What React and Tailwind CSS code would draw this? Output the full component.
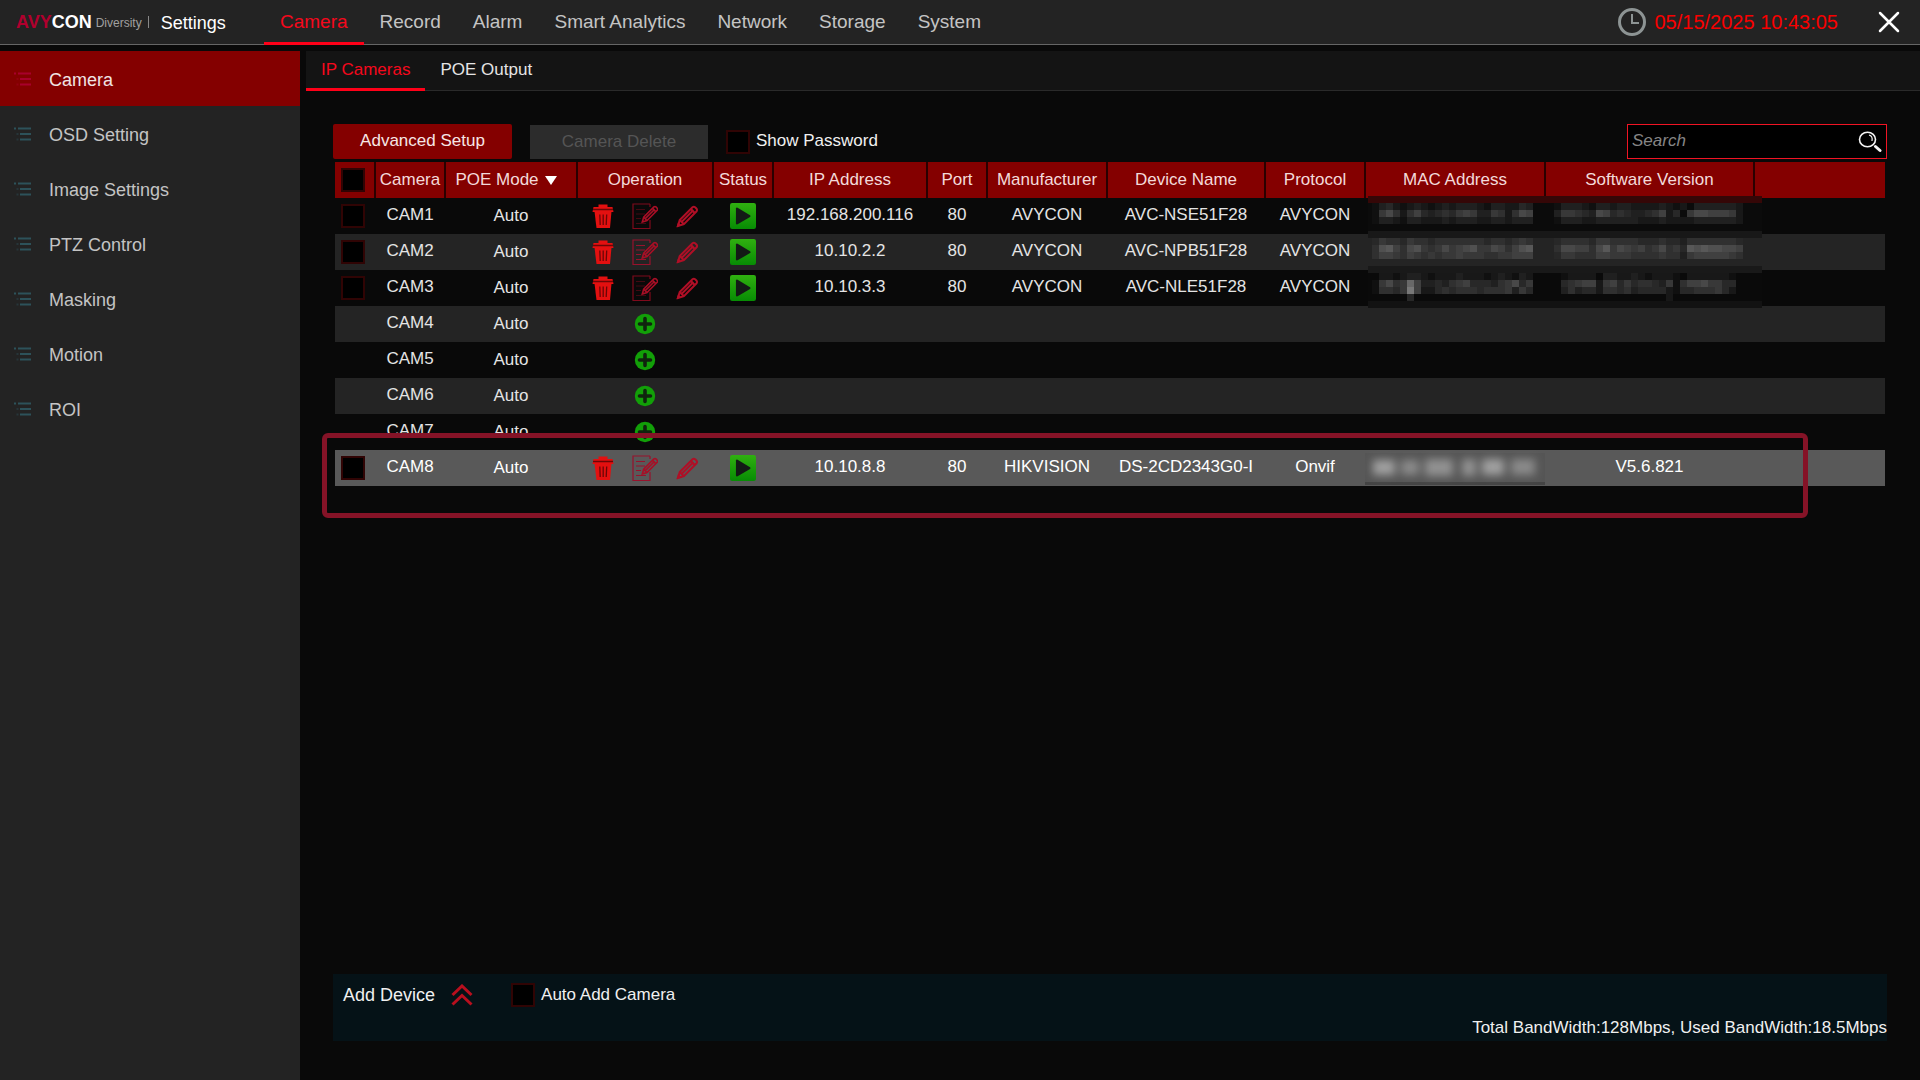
import React, { useState } from 'react';
import clsx from 'clsx';

const NAV = ['Camera', 'Record', 'Alarm', 'Smart Analytics', 'Network', 'Storage', 'System'];
const SIDE = ['Camera', 'OSD Setting', 'Image Settings', 'PTZ Control', 'Masking', 'Motion', 'ROI'];
const TABS = ['IP Cameras', 'POE Output'];

const CAMERAS = [
  { id: 'CAM1', ip: '192.168.200.116', port: 80, maker: 'AVYCON', name: 'AVC-NSE51F28', protocol: 'AVYCON' },
  { id: 'CAM2', ip: '10.10.2.2', port: 80, maker: 'AVYCON', name: 'AVC-NPB51F28', protocol: 'AVYCON' },
  { id: 'CAM3', ip: '10.10.3.3', port: 80, maker: 'AVYCON', name: 'AVC-NLE51F28', protocol: 'AVYCON' },
  { id: 'CAM4' },
  { id: 'CAM5' },
  { id: 'CAM6' },
  { id: 'CAM7' },
  {
    id: 'CAM8',
    ip: '10.10.8.8',
    port: 80,
    maker: 'HIKVISION',
    name: 'DS-2CD2343G0-I',
    protocol: 'Onvif',
    version: 'V5.6.821',
    selected: true,
  },
];

// censored area: one string per line of 7px blocks, each hex digit is a grey level
const MOSAIC = [
  { y: 7, mac: '24532343234344432443354', sw: '244432443443333432314444443' },
  { y: 14, mac: '27963685456578744763698', sw: '477654985654456835179988873' },
  { y: 21, mac: '24432443334344433443444', sw: '244433444444333433334444443' },
  { y: 42, mac: '57665766566666665665676', sw: '566665776666555655466666665' },
  { y: 49, mac: '6ab869a7679789a779868ab', sw: '6998869b79878679675babaa998' },
  { y: 56, mac: '68876876767787776677888', sw: '577666887776666766478888876' },
  { y: 77, mac: '13323443233343332343243', sw: '023333144334323332133333320' },
  { y: 84, mac: '27967d84454678555467957', sw: '056788378575665472688977550' },
  { y: 91, mac: '26657f83356566656667475', sw: '046455366564555532556667530' },
  { y: 98, mac: '11111511111111111111111', sw: '011111111111111131111111110' },
];
const BANDS = [
  [0, '#350707'], [7, '#0b0b0b'], [35, '#181818'], [42, '#242424'],
  [70, '#191919'], [77, '#0a0a0a'], [105, '#121212'],
];

const Mosaic = () => {
  const blocks = (line, x, y) =>
    [...line].map((c, i) => {
      const v = parseInt(c, 16) * 8;
      return v > 8 && <rect key={`${x}-${y}-${i}`} x={x + i * 7} y={y} width="7" height="7" fill={`rgb(${v},${v},${v})`} />;
    });
  return (
    <svg
      className="absolute left-[1033px] top-[34px] pointer-events-none"
      width="394"
      height="112"
      shapeRendering="crispEdges"
      aria-hidden="true"
    >
      {BANDS.map(([y, fill], i) => (
        <rect key={y} y={y} width="394" height={(BANDS[i + 1]?.[0] ?? 112) - y} fill={fill} />
      ))}
      {MOSAIC.map(l => [blocks(l.mac, 4, l.y), blocks(l.sw, 186, l.y)])}
    </svg>
  );
};

const BlurredMac = () => (
  <svg className="block w-full h-9" viewBox="0 0 180 36" preserveAspectRatio="none" aria-hidden="true">
    <defs>
      <filter id="soft" x="-10%" y="-50%" width="120%" height="200%">
        <feGaussianBlur stdDeviation="4" />
      </filter>
    </defs>
    <rect y="3" width="180" height="31" fill="#555" />
    <rect y="32" width="180" height="3" fill="#444" />
    <g filter="url(#soft)" fill="#a0a0a0">
      <rect x="8" y="10" width="22" height="15" />
      <rect x="36" y="10" width="18" height="15" opacity=".7" />
      <rect x="60" y="9" width="28" height="17" opacity=".8" />
      <rect x="97" y="9" width="14" height="17" opacity=".8" />
      <rect x="117" y="9" width="22" height="16" />
      <rect x="146" y="9" width="24" height="16" opacity=".7" />
    </g>
  </svg>
);

const ListIcon = ({ active }) => (
  <svg width="17" height="14" viewBox="0 0 17 14" stroke={active ? '#a8002c' : '#2d525a'} strokeWidth="2">
    <path d="M0 1.5h2M4 1.5h13M6 7h11M6 12.5h11" />
    <path d="M2.5 7h2M2.5 12.5h2" opacity=".4" />
  </svg>
);

const TrashIcon = () => (
  <svg width="26" height="26" viewBox="0 0 26 26" fill="#e31010">
    <path d="M8.500 1.500h9v2.500h5l1 5h-21l1-5h5z" />
    <path d="M4.500 8.500h17L20 25H6.500z" />
    <path d="M3 6.500h20M9.800 11.500l.4 10.500M13.200 11.500V22M16.700 11.500l-.5 10.500" stroke="#6b0606" strokeWidth="1.300" />
  </svg>
);

const Pencil = () => (
  <>
    <path d="M3.500 22.500l1.700-6L18 3.700q1.300-1 2.600 0l1.500 1.500q1 1.300 0 2.600L9.400 20.700z" />
    <path d="M5.200 16.500l4.200 4.200M7.500 18L19 6.500M16.300 5.500l4 4" />
  </>
);

const EditIcon = ({ bright }) => (
  <svg width="26" height="26" viewBox="0 0 26 26" fill="none" stroke={bright ? '#98122c' : '#7f0a1c'} strokeWidth="1.200">
    <path d="M18 1H1v24.500h17V17M18 1v3" />
    <path d="M4 6.500h9M4 11h9M4 15.500h5M4 20.500h10" opacity={bright ? 1 : 0.5} />
    <g transform="translate(7.500 1) scale(.8)" stroke="#a80f26" strokeWidth="2">
      <Pencil />
    </g>
  </svg>
);

const PencilIcon = () => (
  <svg width="26" height="26" viewBox="0 0 26 26" fill="none" stroke="#b00f26" strokeWidth="2">
    <g transform="translate(.5 .5)">
      <Pencil />
    </g>
    <path d="M2.500 24l1.600-5 3.400 3.400z" fill="#b00f26" stroke="none" />
  </svg>
);

const PlayIcon = () => (
  <svg width="26" height="26" viewBox="0 0 24 24">
    <defs>
      <linearGradient id="play" x1="0" y1="0" x2="0" y2="1">
        <stop offset="0" stopColor="#30b010" />
        <stop offset="1" stopColor="#078c04" />
      </linearGradient>
    </defs>
    <rect width="24" height="24" rx="2" fill="url(#play)" />
    <path d="M5.500 5v14q.3 1.200 1.500.7L18.500 13q1-.8 0-1.600L7 4.300q-1.200-.5-1.500.7z" fill="#131a16" />
  </svg>
);

const PlusIcon = () => (
  <svg width="22" height="22" viewBox="0 0 22 22">
    <circle cx="11" cy="11" r="10.200" fill="#129f08" />
    <path d="M11 5.500v11M5.500 11h11" stroke="#10240e" strokeWidth="3.600" strokeLinecap="round" />
  </svg>
);

const Check = ({ className, ...props }) => (
  <input
    type="checkbox"
    className={clsx('appearance-none block size-6 shrink-0 border-2 border-[#300404] bg-black checked:bg-[#840000]', className)}
    {...props}
  />
);

const Row = ({ cam, striped }) => {
  const text = 'pb-0.5 truncate';
  return (
    <tr className={clsx('h-9', cam.selected ? 'bg-[#595959] text-white' : striped && 'bg-[#242424]')}>
      <td className="pl-1.5">{cam.ip && <Check aria-label={`Select ${cam.id}`} />}</td>
      <td className={text}>{cam.id}</td>
      <td>Auto</td>
      <td>
        <div className="flex justify-center gap-4">
          {cam.ip ? (
            <>
              <button aria-label="Delete"><TrashIcon /></button>
              <button aria-label="Edit"><EditIcon bright={cam.selected || striped} /></button>
              <button aria-label="Rename"><PencilIcon /></button>
            </>
          ) : (
            <button aria-label="Add"><PlusIcon /></button>
          )}
        </div>
      </td>
      <td>
        {cam.ip && <button className="block mx-auto" aria-label="Live view"><PlayIcon /></button>}
      </td>
      <td className={text}>{cam.ip}</td>
      <td className={text}>{cam.port}</td>
      <td className={text}>{cam.maker}</td>
      <td className={text}>{cam.name}</td>
      <td className={text}>{cam.protocol}</td>
      <td>{cam.selected && <BlurredMac />}</td>
      <td className={text}>{cam.version}</td>
      <td />
    </tr>
  );
};

const Header = () => (
  <header className="flex h-[45px] shrink-0 bg-[#232323] border-b border-[#666]">
    <div className="w-[264px] shrink-0 pl-4 flex items-center">
      <div className="text-lg font-bold text-[#b0002e]">
        AVY<span className="text-white">CON</span>
      </div>
      <div className="ml-1 pt-0.5 text-xs text-[#a0a0a0]">Diversity</div>
      <div className="ml-1.5 h-3 w-px bg-[#888]" />
      <h1 className="ml-3 pt-0.5 text-lg text-white">Settings</h1>
    </div>
    <nav className="flex -mb-px">
      {NAV.map((item, i) => (
        <a
          key={item}
          href="#"
          className={clsx(
            'px-4 pt-0.5 flex items-center text-[19px] border-b-3',
            i === 0 ? 'text-[#f5081c] border-[#ff0018]' : 'text-[#c4c4c4] border-transparent'
          )}
        >
          {item}
        </a>
      ))}
    </nav>
    <div className="ml-auto mr-5 flex items-center">
      <svg width="28" height="28" viewBox="0 0 28 28" fill="none" stroke="#8d9494" strokeWidth="3">
        <circle cx="14" cy="14" r="12.500" />
        <path d="M14 6v9h7" strokeWidth="2" />
      </svg>
      <time className="ml-2 text-xl text-[#f80000]">05/15/2025 10:43:05</time>
      <button className="ml-10" aria-label="Close">
        <svg width="22" height="22" viewBox="0 0 22 22" stroke="#fff" strokeWidth="2.500" strokeLinecap="round">
          <path d="M2 2l18 18M20 2L2 20" />
        </svg>
      </button>
    </div>
  </header>
);

const Sidebar = () => (
  <aside className="w-[300px] shrink-0 bg-[#232323]">
    {SIDE.map((item, i) => (
      <a
        key={item}
        href="#"
        className={clsx(
          'flex items-center gap-[18px] h-[55px] pl-3.5 text-lg',
          i === 0 ? 'bg-[#840000] text-[#f0e4e4]' : 'text-[#c4c4c4]'
        )}
      >
        <ListIcon active={i === 0} />
        <span className="pt-0.5">{item}</span>
      </a>
    ))}
  </aside>
);

const App = () => {
  const [query, setQuery] = useState('');
  const th = 'font-normal border-r-2 border-[#2a0000]';

  return (
    <div className="min-h-screen flex flex-col bg-[#090909] font-['Liberation_Sans',Arial,sans-serif] text-[17px] text-[#e4e4e4]">
      <Header />
      <div className="flex flex-1 gap-1.5 pt-1.5">
        <Sidebar />
        <main className="flex-1 min-w-0 flex flex-col">
          <div className="flex h-10 bg-[#141414] border-b border-[#2a2a2a]">
            {TABS.map((tab, i) => (
              <button
                key={tab}
                className={clsx(
                  '-mb-px px-[15px] border-b-3',
                  i === 0 ? 'text-[#f5081c] border-[#ff0018]' : 'border-transparent'
                )}
              >
                {tab}
              </button>
            ))}
          </div>

          <div className="flex-1 flex flex-col pt-[33px] pl-[27px] pr-[33px] pb-[39px]">
            <div className="flex items-center h-[35px]">
              <button className="w-[179px] h-full pb-0.5 rounded-xs bg-[#840000] text-[#f6e6e6]">Advanced Setup</button>
              <button disabled className="ml-[18px] w-[178px] h-[34px] bg-[#2c2c2c] text-[#555]">Camera Delete</button>
              <label className="ml-[18px] flex items-center gap-1.5 text-[#f0f0f0]">
                <Check />
                <span className="pb-0.5">Show Password</span>
              </label>
              <div className="ml-auto w-[260px] h-full flex items-center pr-1 bg-black border border-[#f01424]">
                <input
                  type="text"
                  aria-label="Search"
                  placeholder="Search"
                  value={query}
                  onChange={e => setQuery(e.target.value)}
                  className="flex-1 min-w-0 px-1 pb-0.5 italic outline-none placeholder:text-[#858585]"
                />
                <button aria-label="Find">
                  <svg width="24" height="22" viewBox="0 0 24 22" fill="none" stroke="#f4f4f4" strokeWidth="1.600">
                    <ellipse cx="9.500" cy="8.500" rx="8" ry="7.200" />
                    <path d="M11 4q4 1 3 6" strokeWidth="1.200" />
                    <path d="M17.500 15.500l4.500 4" strokeWidth="3" strokeLinecap="round" />
                  </svg>
                </button>
              </div>
            </div>

            <div className="relative mt-[3px] mx-0.5">
              <table className="w-full table-fixed text-center">
                <colgroup>
                  <col className="w-10" />
                  <col className="w-[70px]" />
                  <col className="w-[132px]" />
                  <col className="w-[136px]" />
                  <col className="w-[60px]" />
                  <col className="w-[154px]" />
                  <col className="w-[60px]" />
                  <col className="w-[120px]" />
                  <col className="w-[158px]" />
                  <col className="w-[100px]" />
                  <col className="w-[180px]" />
                  <col className="w-[209px]" />
                  <col />
                </colgroup>
                <thead>
                  <tr className="h-9 bg-[#840000] text-[#f3dada]">
                    <th className={clsx(th, 'pl-1.5')}>
                      <Check aria-label="Select all" />
                    </th>
                    <th className={th}>Camera</th>
                    <th className={clsx(th, 'pr-2.5')}>
                      <button className="inline-flex items-center gap-1.5">
                        POE Mode
                        <svg width="12" height="9" viewBox="0 0 12 9" fill="#fff">
                          <path d="M0 0h12L6 9z" />
                        </svg>
                      </button>
                    </th>
                    <th className={th}>Operation</th>
                    <th className={th}>Status</th>
                    <th className={th}>IP Address</th>
                    <th className={th}>Port</th>
                    <th className={th}>Manufacturer</th>
                    <th className={th}>Device Name</th>
                    <th className={th}>Protocol</th>
                    <th className={th}>MAC Address</th>
                    <th className={th}>Software Version</th>
                    <th />
                  </tr>
                </thead>
                <tbody>
                  {CAMERAS.map((cam, i) => (
                    <Row key={cam.id} cam={cam} striped={i % 2 === 1} />
                  ))}
                </tbody>
              </table>
              <Mosaic />
              {/* callout frame round the selected camera */}
              <div className="absolute -left-[13px] right-[77px] top-[271px] h-[85px] rounded-md border-5 border-[#851327] pointer-events-none" />
            </div>

            <footer className="mt-auto h-[67px] bg-[#051217] pl-2.5 text-[#f0f0f0]">
              <div className="flex items-center h-[42px]">
                <button className="flex items-center gap-4 text-lg">
                  Add Device
                  <svg width="22" height="22" viewBox="0 0 22 22" fill="none" stroke="#b80f1e" strokeWidth="3">
                    <path d="M1.500 11L11 2l9.500 9M1.500 20.500L11 11.500l9.500 9" />
                  </svg>
                </button>
                <label className="ml-[38px] flex items-center gap-1.5">
                  <Check />
                  Auto Add Camera
                </label>
              </div>
              <p className="text-right leading-6">Total BandWidth:128Mbps, Used BandWidth:18.5Mbps</p>
            </footer>
          </div>
        </main>
      </div>
    </div>
  );
};

export default App;
